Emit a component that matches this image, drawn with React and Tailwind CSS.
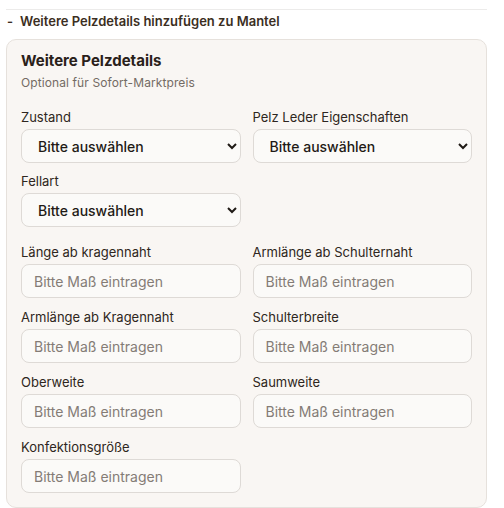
import React from "react";

const font = { fontFamily: "Inter, 'Noto Sans', sans-serif" };

const SelectField = ({ label }) => (
  <div className="flex flex-col">
    <label className="text-[13px] leading-4 text-[#2e2620] mb-1">{label}</label>
    <select className="h-[34px] w-full rounded-lg border border-[#dedad6] bg-[#fbfaf8] pl-[12px] pr-2 text-[14px] font-medium text-[#1f1a16]">
      <option>Bitte auswählen</option>
    </select>
  </div>
);

const InputField = ({ label }) => (
  <div className="flex flex-col">
    <label className="text-[13px] leading-4 text-[#2e2620] mb-1">{label}</label>
    <input
      className="h-[34px] w-full rounded-lg border border-[#dedad6] bg-[#fbfaf8] px-3 text-[14px] text-[#1f1a16] placeholder:text-[#847c76] outline-none"
      placeholder="Bitte Maß eintragen"
    />
  </div>
);

const App = () => {
  return (
    <div className="w-[504px] h-[508px] bg-white pt-[9px] px-[6px]" style={font}>
      <div className="w-[481px] border-t border-[#ecebea]" />
      <div className="mt-[3px] flex items-center gap-[7px] pl-[1px] text-[13px] font-semibold text-[#3b2e22] leading-4">
        <span>-</span>
        <span>Weitere Pelzdetails hinzufügen zu Mantel</span>
      </div>
      <div className="mt-[10px] w-[481px] rounded-[10px] border border-[#e6e1dc] bg-[#f9f6f3] px-[14px] pt-[11px] pb-[14px]">
        <h2 className="text-[15px] font-bold text-[#2a211a] leading-5">Weitere Pelzdetails</h2>
        <p className="mt-[4px] text-[12px] text-[#746b64] leading-4 tracking-[0.1px]">Optional für Sofort-Marktpreis</p>
        <div className="mt-[18px] grid grid-cols-2 gap-x-3 gap-y-[10px]">
          <SelectField label="Zustand" />
          <SelectField label="Pelz Leder Eigenschaften" />
          <SelectField label="Fellart" />
        </div>
        <div className="mt-[17px] grid grid-cols-2 gap-x-3 gap-y-[11px]">
          <InputField label="Länge ab kragennaht" />
          <InputField label="Armlänge ab Schulternaht" />
          <InputField label="Armlänge ab Kragennaht" />
          <InputField label="Schulterbreite" />
          <InputField label="Oberweite" />
          <InputField label="Saumweite" />
          <InputField label="Konfektionsgröße" />
        </div>
      </div>
    </div>
  );
};

export default App;
